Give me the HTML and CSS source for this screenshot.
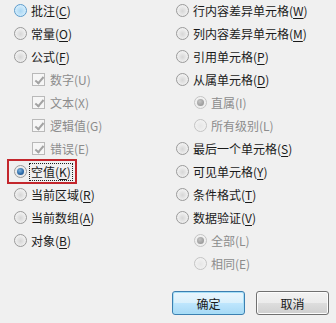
FILE: index.html
```html
<!DOCTYPE html>
<html lang="zh-CN">
<head>
    <meta charset="UTF-8">
    <title>定位条件</title>
    <link rel="stylesheet" href="styles.css">
</head>
<body>
    <div class="dialog">
        <div class="columns">
            <div class="col">
                <div class="item"><span class="radio hover"></span><span class="label">批注(<u>C</u>)</span></div>
                <div class="item"><span class="radio"></span><span class="label">常量(<u>O</u>)</span></div>
                <div class="item"><span class="radio"></span><span class="label">公式(<u>F</u>)</span></div>
                <div class="item sub off"><span class="check"></span><span class="label">数字(U)</span></div>
                <div class="item sub off"><span class="check"></span><span class="label">文本(X)</span></div>
                <div class="item sub off"><span class="check"></span><span class="label">逻辑值(G)</span></div>
                <div class="item sub off"><span class="check"></span><span class="label">错误(E)</span></div>
                <div class="item marked"><span class="radio on"></span><span class="label focus">空值(<u>K</u>)</span></div>
                <div class="item"><span class="radio"></span><span class="label">当前区域(<u>R</u>)</span></div>
                <div class="item"><span class="radio"></span><span class="label">当前数组(<u>A</u>)</span></div>
                <div class="item"><span class="radio"></span><span class="label">对象(<u>B</u>)</span></div>
            </div>
            <div class="col">
                <div class="item"><span class="radio"></span><span class="label">行内容差异单元格(<u>W</u>)</span></div>
                <div class="item"><span class="radio"></span><span class="label">列内容差异单元格(<u>M</u>)</span></div>
                <div class="item"><span class="radio"></span><span class="label">引用单元格(<u>P</u>)</span></div>
                <div class="item"><span class="radio"></span><span class="label">从属单元格(<u>D</u>)</span></div>
                <div class="item sub off"><span class="radio on"></span><span class="label">直属(I)</span></div>
                <div class="item sub off"><span class="radio"></span><span class="label">所有级别(L)</span></div>
                <div class="item"><span class="radio"></span><span class="label">最后一个单元格(<u>S</u>)</span></div>
                <div class="item"><span class="radio"></span><span class="label">可见单元格(<u>Y</u>)</span></div>
                <div class="item"><span class="radio"></span><span class="label">条件格式(<u>T</u>)</span></div>
                <div class="item"><span class="radio"></span><span class="label">数据验证(<u>V</u>)</span></div>
                <div class="item sub off"><span class="radio on"></span><span class="label">全部(L)</span></div>
                <div class="item sub off"><span class="radio"></span><span class="label">相同(E)</span></div>
            </div>
        </div>
        <div class="buttons">
            <button type="button" class="btn default">确定</button>
            <button type="button" class="btn">取消</button>
        </div>
    </div>
</body>
</html>
```

FILE: styles.css
```css
body {
    margin: 0;
    background-color: #f0f0f0;
    font-family: "Noto Sans CJK SC", "Noto Sans", sans-serif;
    font-size: 12px;
    color: #1a1a1a;
}

.dialog {
    margin-top: -1px;
    padding-left: 14px;
}

.columns {
    display: grid;
    grid-template-columns: 162px 1fr;
}

.item {
    height: 23px;
    display: flex;
    align-items: center;
    white-space: nowrap;
}

.item u {
    text-decoration-thickness: 1px;
    text-underline-offset: 2px;
}

.label {
    margin-left: 4px;
}

.sub {
    padding-left: 18px;
}

.off .label {
    color: #8c8c8c;
}

/* radio buttons */
.radio {
    width: 11px;
    height: 11px;
    border: 1px solid #9a9a9a;
    border-radius: 50%;
    background: radial-gradient(circle at 50% 55%, #d6d6d6 0%, #ececec 55%, #fafafa 100%);
    position: relative;
    flex: none;
}

.radio.hover {
    border-color: #5c9ccc;
    background: radial-gradient(circle at 50% 55%, #a9d6f3 0%, #cbe8fa 55%, #eef8ff 100%);
}

.radio.on::after {
    content: "";
    position: absolute;
    left: 2px;
    top: 2px;
    width: 7px;
    height: 7px;
    border-radius: 50%;
    background: radial-gradient(circle at 40% 35%, #7fb4df 0%, #2a68a6 60%, #1d4d82 100%);
}

.off .radio {
    border-color: #c4c4c4;
    background: radial-gradient(circle at 50% 55%, #e6e6e6 0%, #f0f0f0 60%, #f8f8f8 100%);
}

.off .radio.on::after {
    background: radial-gradient(circle at 40% 35%, #c4c4c4 0%, #9c9c9c 70%);
}

/* disabled checkboxes */
.check {
    width: 11px;
    height: 11px;
    border: 1px solid #b9b9b9;
    background: #f6f6f6;
    position: relative;
    flex: none;
}

.check::after {
    content: "";
    position: absolute;
    left: 4px;
    top: 1px;
    width: 3px;
    height: 7px;
    border: solid #a3a3a3;
    border-width: 0 2px 2px 0;
    transform: rotate(40deg);
}

.sub .check + .label {
    margin-left: 5px;
}

/* red annotation and focus rect */
.marked {
    position: relative;
    width: max-content;
}

.marked::after {
    content: "";
    position: absolute;
    left: -7px;
    top: -1px;
    width: 66px;
    height: 21px;
    border: 2px solid #c3262c;
}

.focus {
    margin-left: 2px;
    padding: 0 1px;
    border: 1px dotted #222;
    line-height: 16px;
}

/* buttons */
.buttons {
    display: flex;
    justify-content: flex-end;
    gap: 11px;
    margin-top: 16px;
    padding-right: 7px;
}

.btn {
    width: 73px;
    height: 24px;
    font-family: "Noto Sans CJK SC", sans-serif;
    font-size: 12px;
    color: #1a1a1a;
    border: 1px solid #707070;
    border-radius: 3px;
    background: linear-gradient(#f2f2f2 0%, #ebebeb 50%, #dddddd 51%, #cfcfcf 100%);
    box-shadow: inset 0 0 0 1px #fcfcfc;
    padding: 0;
}

.btn.default {
    border-color: #3c7fb1;
    box-shadow: inset 0 0 0 1px #a6dff7;
    background: linear-gradient(#eaf6fd 0%, #d9f0fc 50%, #bee6fd 51%, #a7d9f5 100%);
}
```
